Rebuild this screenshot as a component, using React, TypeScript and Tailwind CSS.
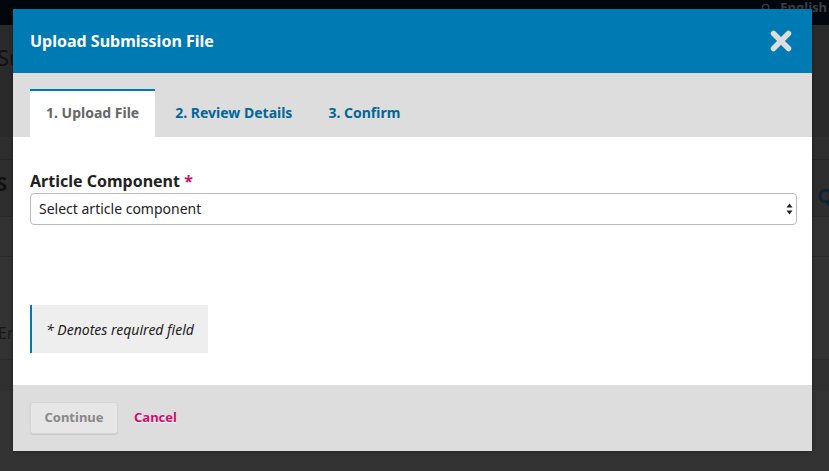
import React from "react";

const font = { fontFamily: '"Noto Sans", "Open Sans", sans-serif' };

function CloseIcon() {
  return (
    <svg width="24" height="24" viewBox="0 0 24 24" aria-hidden="true">
      <path d="M4.5 4.5 L19.5 19.5 M19.5 4.5 L4.5 19.5" stroke="#dddddd" strokeWidth="5.5" strokeLinecap="round" fill="none" />
    </svg>
  );
}

function SelectArrows() {
  return (
    <svg width="7" height="12" viewBox="0 0 7 12" aria-hidden="true">
      <path d="M3.5 0.5 L6.5 4.5 L0.5 4.5 Z" fill="#222" />
      <path d="M3.5 11.5 L6.5 7.5 L0.5 7.5 Z" fill="#222" />
    </svg>
  );
}

export default function App() {
  return (
    <div className="relative w-[829px] h-[471px] overflow-hidden bg-[#333333]" style={font}>
      {/* dimmed page behind the modal */}
      <div className="flex flex-col">
        <div className="h-[25px] bg-[#03070d] flex items-center justify-end pr-[2px] gap-[8px]">
          <svg width="11" height="11" viewBox="0 0 12 12" aria-hidden="true" className="-mt-[8px]">
            <circle cx="5" cy="5" r="3.5" stroke="#3b4046" strokeWidth="1.6" fill="none" />
            <path d="M7.5 7.5 L10.5 10.5" stroke="#3b4046" strokeWidth="1.6" />
          </svg>
          <span className="text-[13px] font-bold text-[#3b4046] leading-none -mt-[10px]">English</span>
        </div>
        <div className="h-[112px] bg-[#2a2a2a] flex items-start pt-[17px]">
          <span className="text-[22px] text-[#111] -ml-[3px] leading-[30px]">Su</span>
        </div>
        <div className="h-[23px] bg-[#2e2e2e] border-b border-[#262626]"></div>
        <div className="h-[57px] bg-[#2e2e2e] border-b border-[#282828] flex items-center justify-between">
          <span className="text-[20px] font-bold text-[#111] -ml-[4px] -mt-[8px]">S</span>
          <span className="text-[20px] font-bold text-[#0b2433] -mr-[4px] mt-[16px]">Q</span>
        </div>
        <div className="h-[40px] bg-[#323232] border-b border-[#2a2a2a]"></div>
        <div className="h-[103px] bg-[#333333] border-b border-[#2b2b2b] flex items-end pb-[14px]">
          <span className="text-[16px] text-[#1a1a1a] -ml-[2px]">En</span>
        </div>
        <div className="h-[30px] bg-[#303030] border-b border-[#2c2c2c]"></div>
      </div>

      {/* modal */}
      <div className="absolute left-[13px] top-[9px] w-[799px] h-[442px] flex flex-col shadow-[0_0_4px_rgba(0,0,0,0.4)]">
        <div className="h-[64px] bg-[#007ab2] flex items-center justify-between pl-[17px] pr-[19px]">
          <h1 className="text-[16px] font-bold text-white leading-none -mt-[1px]">Upload Submission File</h1>
          <CloseIcon />
        </div>

        <div className="h-[64px] bg-[#dddddd] flex items-end pl-[17px] gap-[4px]">
          <div className="h-[48px] px-[16px] pb-[4px] bg-white border-t-2 border-[#007ab2] flex items-center text-[14px] font-bold text-[#666666]">
            1. Upload File
          </div>
          <div className="h-[48px] px-[16px] pb-[2px] flex items-center text-[14px] font-bold text-[#006798]">
            2. Review Details
          </div>
          <div className="h-[48px] px-[16px] pb-[2px] flex items-center text-[14px] font-bold text-[#006798]">
            3. Confirm
          </div>
        </div>

        <div className="flex-1 bg-white pl-[17px] pr-[15px] pt-[32px] flex flex-col">
          <label className="text-[16px] font-bold text-[#222] leading-[24px]">
            Article Component <span className="text-[#d00a6c]">*</span>
          </label>
          <div className="h-[32px] border border-[#bbbbbb] rounded-[4px] flex items-center justify-between pl-[8px] pr-[3px]">
            <span className="text-[14px] text-[#222] -mt-[1px]">Select article component</span>
            <SelectArrows />
          </div>
          <div className="mt-[80px] w-[178px] h-[48px] bg-[#eeeeee] border-l-2 border-[#007ab2] flex items-center pl-[14px]">
            <span className="text-[14px] italic text-[#222]">* Denotes required field</span>
          </div>
        </div>

        <div className="h-[66px] bg-[#dddddd] flex items-center pl-[17px] gap-[16px]">
          <button className="h-[32px] w-[88px] bg-[#e6e6e6] border border-[#d4d4d4] rounded-[3px] shadow-[0_1px_1px_rgba(0,0,0,0.1)] text-[13px] font-bold text-[#888888]">
            Continue
          </button>
          <span className="text-[13px] font-bold text-[#d00a6c] [text-shadow:0_1px_0_#fff]">Cancel</span>
        </div>
      </div>
    </div>
  );
}
